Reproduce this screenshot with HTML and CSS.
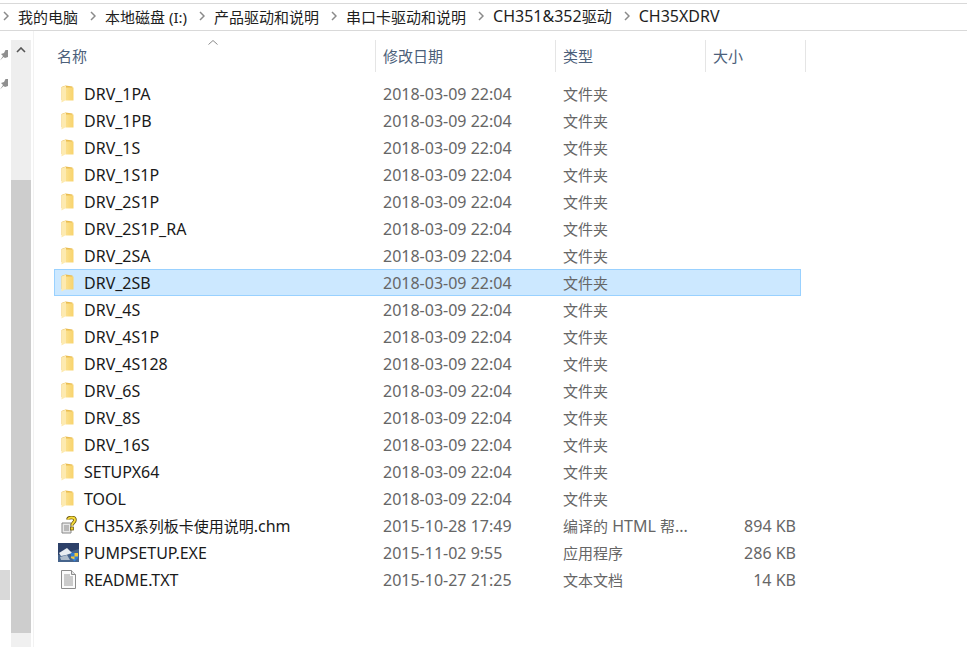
FILE: index.html
```html
<!DOCTYPE html>
<html lang="zh">
<head>
<meta charset="utf-8">
<title>CH35XDRV</title>
<link rel="stylesheet" href="styles.css">
</head>
<body>
<svg width="0" height="0" class="defs">
  <defs>
    <linearGradient id="fg" x1="0" y1="0" x2="1" y2="0"><stop offset="0" stop-color="#fbe08e"/><stop offset="1" stop-color="#f8d36c"/></linearGradient>
    <symbol id="folder" viewBox="0 0 14 18">
      <path d="M1 2 L5 0.500 L12 1.500 L12 15 L1 15 Z" fill="#e9bc50"/>
      <path d="M5 2.500 L13 2.500 L13 15.500 L5 15.500 Z" fill="url(#fg)"/>
      <path d="M1 2.500 L5.500 0.500 L5.500 15 L1 17.500 Z" fill="#fdeab0"/>
    </symbol>
  </defs>
</svg>
<nav class="crumbs">
  <svg class="chev" viewBox="0 0 6 10"><path d="M1 1l4 4-4 4" /></svg><span class="zh">我的电脑</span>
  <svg class="chev" viewBox="0 0 6 10"><path d="M1 1l4 4-4 4" /></svg><span class="zh">本地磁盘 (I:)</span>
  <svg class="chev" viewBox="0 0 6 10"><path d="M1 1l4 4-4 4" /></svg><span class="zh">产品驱动和说明</span>
  <svg class="chev" viewBox="0 0 6 10"><path d="M1 1l4 4-4 4" /></svg><span class="zh">串口卡驱动和说明</span>
  <svg class="chev" viewBox="0 0 6 10"><path d="M1 1l4 4-4 4" /></svg><span>CH351&amp;352<span class="zh">驱动</span></span>
  <svg class="chev" viewBox="0 0 6 10"><path d="M1 1l4 4-4 4" /></svg><span>CH35XDRV</span>
</nav>
<main class="body">
  <aside class="nav">
    <div class="pins">
      <svg class="pin" viewBox="0 0 8 12"><path d="M0 11.500L3 7L1 5L4 4L5.500 1L8 1L8 8L5 9L3.500 8Z"/></svg>
      <svg class="pin" viewBox="0 0 8 12"><path d="M0 11.500L3 7L1 5L4 4L5.500 1L8 1L8 8L5 9L3.500 8Z"/></svg>
    </div>
    <div class="nav-thumb"></div>
  </aside>
  <div class="scrollbar">
    <div class="track-top"><svg class="up" viewBox="0 0 10 6"><path d="M1 5l4-4 4 4"/></svg></div>
    <div class="thumb"></div>
    <div class="track-end"></div>
  </div>
  <section class="list">
    <header class="head">
      <svg class="sort" viewBox="0 0 10 5"><path d="M0.500 4.500L5 0.500l4.500 4"/></svg>
      <div class="hc h-name zh">名称</div>
      <div class="hc h-date zh">修改日期</div>
      <div class="hc h-type zh">类型</div>
      <div class="hc h-size zh">大小</div>
    </header>
    <div class="rows">
      <div class="row"><div class="c-name"><svg class="ico"><use href="#folder"/></svg>DRV_1PA</div><div class="c-date">2018-03-09 22:04</div><div class="c-type zh">文件夹</div><div class="c-size"></div></div>
      <div class="row"><div class="c-name"><svg class="ico"><use href="#folder"/></svg>DRV_1PB</div><div class="c-date">2018-03-09 22:04</div><div class="c-type zh">文件夹</div><div class="c-size"></div></div>
      <div class="row"><div class="c-name"><svg class="ico"><use href="#folder"/></svg>DRV_1S</div><div class="c-date">2018-03-09 22:04</div><div class="c-type zh">文件夹</div><div class="c-size"></div></div>
      <div class="row"><div class="c-name"><svg class="ico"><use href="#folder"/></svg>DRV_1S1P</div><div class="c-date">2018-03-09 22:04</div><div class="c-type zh">文件夹</div><div class="c-size"></div></div>
      <div class="row"><div class="c-name"><svg class="ico"><use href="#folder"/></svg>DRV_2S1P</div><div class="c-date">2018-03-09 22:04</div><div class="c-type zh">文件夹</div><div class="c-size"></div></div>
      <div class="row"><div class="c-name"><svg class="ico"><use href="#folder"/></svg>DRV_2S1P_RA</div><div class="c-date">2018-03-09 22:04</div><div class="c-type zh">文件夹</div><div class="c-size"></div></div>
      <div class="row"><div class="c-name"><svg class="ico"><use href="#folder"/></svg>DRV_2SA</div><div class="c-date">2018-03-09 22:04</div><div class="c-type zh">文件夹</div><div class="c-size"></div></div>
      <div class="row selected"><div class="c-name"><svg class="ico"><use href="#folder"/></svg>DRV_2SB</div><div class="c-date">2018-03-09 22:04</div><div class="c-type zh">文件夹</div><div class="c-size"></div></div>
      <div class="row"><div class="c-name"><svg class="ico"><use href="#folder"/></svg>DRV_4S</div><div class="c-date">2018-03-09 22:04</div><div class="c-type zh">文件夹</div><div class="c-size"></div></div>
      <div class="row"><div class="c-name"><svg class="ico"><use href="#folder"/></svg>DRV_4S1P</div><div class="c-date">2018-03-09 22:04</div><div class="c-type zh">文件夹</div><div class="c-size"></div></div>
      <div class="row"><div class="c-name"><svg class="ico"><use href="#folder"/></svg>DRV_4S128</div><div class="c-date">2018-03-09 22:04</div><div class="c-type zh">文件夹</div><div class="c-size"></div></div>
      <div class="row"><div class="c-name"><svg class="ico"><use href="#folder"/></svg>DRV_6S</div><div class="c-date">2018-03-09 22:04</div><div class="c-type zh">文件夹</div><div class="c-size"></div></div>
      <div class="row"><div class="c-name"><svg class="ico"><use href="#folder"/></svg>DRV_8S</div><div class="c-date">2018-03-09 22:04</div><div class="c-type zh">文件夹</div><div class="c-size"></div></div>
      <div class="row"><div class="c-name"><svg class="ico"><use href="#folder"/></svg>DRV_16S</div><div class="c-date">2018-03-09 22:04</div><div class="c-type zh">文件夹</div><div class="c-size"></div></div>
      <div class="row"><div class="c-name"><svg class="ico"><use href="#folder"/></svg>SETUPX64</div><div class="c-date">2018-03-09 22:04</div><div class="c-type zh">文件夹</div><div class="c-size"></div></div>
      <div class="row"><div class="c-name"><svg class="ico"><use href="#folder"/></svg>TOOL</div><div class="c-date">2018-03-09 22:04</div><div class="c-type zh">文件夹</div><div class="c-size"></div></div>
      <div class="row"><div class="c-name"><svg class="ico wide" viewBox="0 0 21 19">
        <path d="M4 7h9v10H4z" fill="#e8e8e8" stroke="#8a8a8a"/><path d="M6 10h5M6 12h5M6 14h5" stroke="#8a8a8a"/>
        <path d="M10 3.500C10 1 17 .500 17 4C17 6.500 14 6.500 14 9.500" fill="none" stroke="#6f5a10" stroke-width="3.500"/>
        <path d="M10 3.500C10 1 17 .500 17 4C17 6.500 14 6.500 14 9.500" fill="none" stroke="#f7dc3c" stroke-width="1.800"/>
        <rect x="12.500" y="11" width="3" height="3" fill="#f0d030" stroke="#6f5a10" stroke-width=".8"/>
      </svg><span>CH35X<span class="zh">系列板卡使用说明</span>.chm</span></div><div class="c-date">2015-10-28 17:49</div><div class="c-type"><span class="zh">编译的</span> HTML <span class="zh">帮</span>...</div><div class="c-size">894 KB</div></div>
      <div class="row"><div class="c-name"><svg class="ico wide" viewBox="0 0 21 19">
        <rect x="0" y="0" width="21" height="19" fill="#46648c"/><path d="M0 0h21v6L0 12z" fill="#2c4068"/>
        <path d="M1 10 L9 5 L14 10 L8 12 L3 13z" fill="#e8edf2"/><path d="M2 14 L9 12 L12 17 L3 17z" fill="#aebccb"/>
        <path d="M13 10h7v5l-3.500 3.500L13 15z" fill="#2f7fd8"/><path d="M16.500 10h3.500v3.500h-3.500zM13 13.500h3.500v3l-3.500-1.500z" fill="#f2c83a"/>
      </svg><span>PUMPSETUP.EXE</span></div><div class="c-date">2015-11-02 9:55</div><div class="c-type zh">应用程序</div><div class="c-size">286 KB</div></div>
      <div class="row"><div class="c-name"><svg class="ico doc" viewBox="0 0 15 19">
        <path d="M.5.5h10l4 4v14H.5z" fill="#fbfbfb" stroke="#8c8c8c"/><path d="M10.500.5v4h4" fill="#e4e4e4" stroke="#8c8c8c"/>
        <path d="M3 5h6M3 7h9M3 9h9M3 11h9M3 13h9M3 15h9" stroke="#9a9a9a"/>
      </svg><span>README.TXT</span></div><div class="c-date">2015-10-27 21:25</div><div class="c-type zh">文本文档</div><div class="c-size">14 KB</div></div>
    </div>
  </section>
</main>
</body>
</html>
```

FILE: styles.css
```css
* { box-sizing: border-box; }
html, body { margin: 0; height: 100%; }
body {
  width: 967px;
  height: 647px;
  overflow: hidden;
  background: #fff;
  font-family: "Noto Sans", "Noto Sans CJK SC", sans-serif;
  font-size: 16px;
  color: #1a1a1a;
  padding-top: 3px;
}
.zh { font-size: 15px; }
.defs { position: absolute; }
.crumbs {
  height: 28px;
  border-top: 1px solid #d9d9d9;
  border-bottom: 1px solid #d9d9d9;
  display: flex;
  align-items: center;
  padding-left: 3px;
  padding-bottom: 2px;
  white-space: nowrap;
}
.crumbs > span { margin-left: 9px; margin-right: 12px; color: #1e1e1e; }
.chev { width: 6px; height: 10px; fill: none; stroke: #8a8a8a; stroke-width: 1.5; flex: none; }
.body { display: flex; height: 616px; }
.nav { width: 11px; flex: none; position: relative; }
.pins { display: flex; flex-direction: column; gap: 17px; padding-top: 18px; }
.pin { width: 8px; height: 12px; fill: #8f8f8f; }
.nav-thumb { position: absolute; left: 0; top: 539px; width: 10px; height: 30px; background: #d9d9d9; }
.scrollbar { width: 20px; flex: none; display: flex; flex-direction: column; margin-top: 9px; }
.track-top { height: 140px; background: #eeeeee; display: flex; justify-content: center; padding-top: 7px; }
.up { width: 10px; height: 6px; fill: none; stroke: #555; stroke-width: 1.6; }
.thumb { height: 453px; background: #cdcdcd; }
.track-end { flex: 1; background: #f0f0f0; }
.list { flex: 1; min-width: 0; border-left: 1px solid #f2f2f2; margin-left: 2px; position: relative; }
.head { display: flex; height: 41px; padding-top: 9px; padding-left: 22px; color: #4c607a; position: relative; }
.sort { position: absolute; left: 174px; top: 9px; width: 10px; height: 5px; fill: none; stroke: #8a8a8a; }
.hc { height: 32px; line-height: 32px; padding-left: 7px; border-right: 1px solid #e5e5e5; }
.h-name { width: 320px; padding-left: 1px; }
.h-date { width: 180px; }
.h-type { width: 150px; }
.h-size { width: 100px; }
.rows { padding-top: 8px; padding-left: 20px; }
.row { display: flex; height: 27px; width: 747px; align-items: center; border: 1px solid transparent; color: #666; white-space: nowrap; }
.row.selected { background: #cce8ff; border-color: #99d1ff; }
.c-name { width: 321px; flex: none; display: flex; align-items: center; padding-left: 5px; color: #1a1a1a; }
.c-date { width: 180px; flex: none; padding-left: 7px; }
.c-type { width: 130px; flex: none; padding-left: 7px; }
.c-size { width: 110px; flex: none; text-align: right; }
.ico { width: 15px; height: 18px; margin-right: 9px; flex: none; }
.ico.wide { margin-left: -2px; width: 21px; height: 19px; margin-right: 5px; }
.ico.doc { margin-left: 1px; width: 15px; height: 19px; margin-right: 8px; }
```
